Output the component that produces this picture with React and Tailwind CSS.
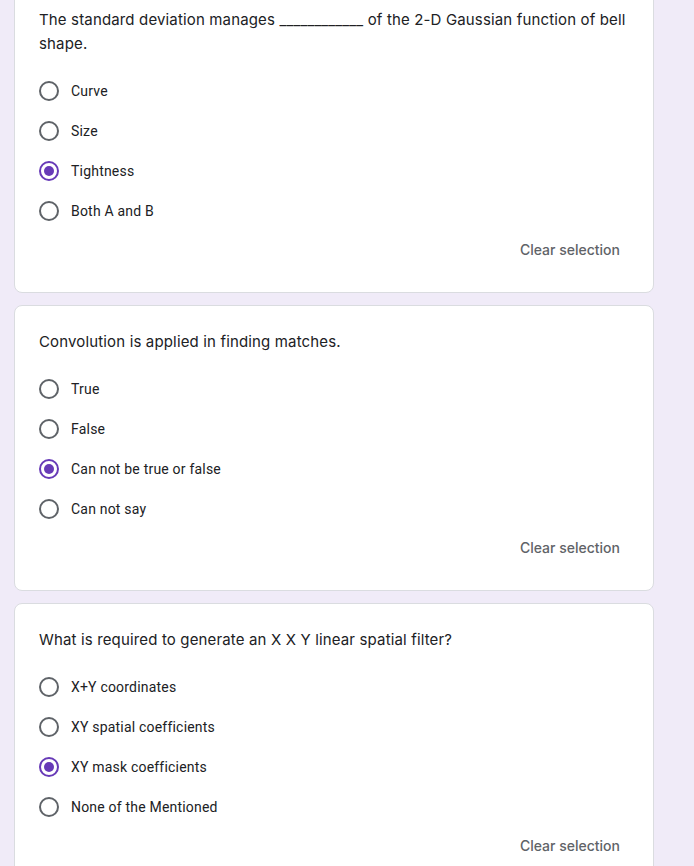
import React from 'react';

const questions = [
  {
    text: 'The standard deviation manages ____________ of the 2-D Gaussian function of bell shape.',
    options: ['Curve', 'Size', 'Tightness', 'Both A and B'],
    selected: 2,
  },
  {
    text: 'Convolution is applied in finding matches.',
    options: ['True', 'False', 'Can not be true or false', 'Can not say'],
    selected: 2,
  },
  {
    text: 'What is required to generate an X X Y linear spatial filter?',
    options: ['X+Y coordinates', 'XY spatial coefficients', 'XY mask coefficients', 'None of the Mentioned'],
    selected: 2,
  },
];

function Radio({ checked }) {
  return (
    <div
      className={
        checked
          ? 'w-5 h-5 rounded-full border-2 border-[#673ab7] flex items-center justify-center shrink-0'
          : 'w-5 h-5 rounded-full border-2 border-[#5f6368] shrink-0'
      }
    >
      {checked && <div className="w-[10px] h-[10px] rounded-full bg-[#673ab7]" />}
    </div>
  );
}

function QuestionCard({ q }) {
  return (
    <div className="w-[640px] bg-white border border-[#dadce0] rounded-lg px-6 pt-6 pb-[25px]">
      <div
        className="text-[15px] leading-6 text-[#202124] tracking-[0.15px] -mr-2"
        style={{ fontFamily: 'Inter, "Open Sans", sans-serif' }}
      >
        {q.text}
      </div>
      <div className="mt-[15px]">
        {q.options.map((opt, i) => (
          <div key={opt} className="h-10 flex items-center">
            <Radio checked={i === q.selected} />
            <span
              className="ml-3 text-[14px] text-[#202124] tracking-[0.2px]"
              style={{ fontFamily: 'Roboto, Arial, sans-serif' }}
            >
              {opt}
            </span>
          </div>
        ))}
      </div>
      <div className="h-9 flex items-center justify-end pr-[9px]">
        <span
          className="text-[14px] font-medium text-[#5f6368]"
          style={{ fontFamily: 'Inter, "Open Sans", sans-serif' }}
        >
          Clear selection
        </span>
      </div>
    </div>
  );
}

export default function App() {
  return (
    <div className="bg-[#f0ebf8] pl-[14px] overflow-hidden h-[866px]">
      <div className="flex flex-col gap-3 -mt-[17px]">
        {questions.map((q, i) => (
          <QuestionCard key={i} q={q} />
        ))}
      </div>
    </div>
  );
}
